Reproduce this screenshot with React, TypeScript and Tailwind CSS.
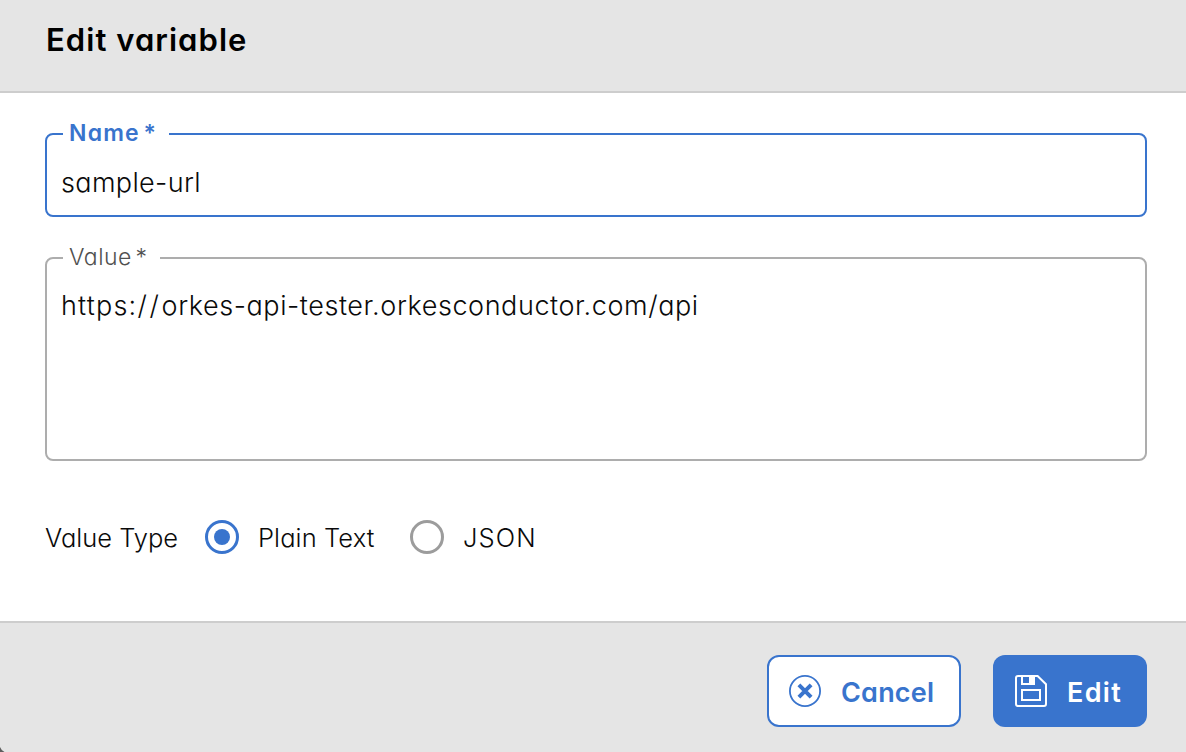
import type { ReactNode } from "react";

function Text({ className, children }: { className: string; children: ReactNode }) {
  return <span className={`block whitespace-nowrap ${className}`}>{children}</span>;
}

function CancelIcon() {
  return (
    <svg width="32" height="32" viewBox="0 0 32 32" fill="none" stroke="currentColor">
      <circle cx="16" cy="16" r="15.1" strokeWidth="1.8" />
      <path d="M9.9 9.9 22.1 22.1M22.1 9.9 9.9 22.1" strokeWidth="4" />
    </svg>
  );
}

function SaveIcon() {
  return (
    <svg width="32" height="32" viewBox="0 0 32 32" fill="none" stroke="currentColor" strokeWidth="2">
      <path d="M3 1H22.6L31 9.2V29Q31 31 29 31H3Q1 31 1 29V3Q1 1 3 1Z" />
      <path d="M7 1V9H19V1" />
      <path d="M14 1H20V10H14Z" fill="currentColor" stroke="none" />
      <path d="M7 15H25V25H7Z" />
    </svg>
  );
}

function Radio({ checked }: { checked?: boolean }) {
  return (
    <span
      role="radio"
      aria-checked={!!checked}
      className={`flex size-[34px] shrink-0 items-center justify-center rounded-full border-[3px] ${checked ? "border-[#3974cd]" : "border-[#9c9c9c]"}`}
    >
      {checked && <span className="size-4 rounded-full bg-[#3974cd]" />}
    </span>
  );
}

export default function App() {
  return (
    <div className="relative flex h-[752px] w-[1186px] flex-col overflow-hidden bg-white font-['Inter',sans-serif] font-light text-[#0a0a0a] [font-feature-settings:'cv11','ss03']">
      <header className="h-[93px] shrink-0 border-b-2 border-[#cdcdcd] bg-[#e5e5e5] pt-5 pl-[46px]">
        <Text className="text-[31px] leading-10 font-semibold tracking-[1.05px] text-black">Edit variable</Text>
      </header>

      <main className="flex flex-1 flex-col px-[45px] pt-[29px] pr-[39px]">
        <fieldset className="h-[95px] shrink-0 rounded-lg border-2 border-[#3974cd] pl-[14px]">
          <legend className="ml-[2px] h-6 w-[106px] pl-[6px] text-[#3974cd]">
            <Text className="text-[23px] leading-[22px] font-semibold tracking-[1.2px] [word-spacing:-3.5px]">Name *</Text>
          </legend>
          <Text className="pt-[19px] text-[27px] leading-9 tracking-[0.35px]">sample-url</Text>
        </fieldset>

        <fieldset className="mt-[29px] h-[215px] shrink-0 rounded-lg border-2 border-[#adadad] pl-[14px]">
          <legend className="ml-[2px] h-6 w-[97px] pl-[6px] text-[#505050]">
            <Text className="text-[23px] leading-[22px] tracking-[0.5px] [word-spacing:-3.5px]">Value *</Text>
          </legend>
          <Text className="pt-[18px] text-[27px] leading-9 tracking-[0.57px]">
            <span className="tracking-[1.2px]">https:</span><span className="tracking-[2.7px]">//</span>orkes-api-tester.orkesconductor.com/api
          </Text>
        </fieldset>

        <div className="mt-[56px] flex h-10 items-center" role="radiogroup">
          <Text className="w-[160px] pt-0.5 text-[25.5px]">Value Type</Text>
          <Radio checked />
          <Text className="w-[171px] pt-0.5 pl-[19px] text-[25.5px] tracking-[0.1px]">Plain Text</Text>
          <Radio />
          <Text className="pt-0.5 pl-[19px] text-[25.5px] tracking-[1.1px]">JSON</Text>
        </div>
      </main>

      <footer className="flex h-[131px] shrink-0 items-start justify-end gap-8 border-t-2 border-[#cdcdcd] bg-[#e5e5e5] pt-8 pr-[39px]">
        <button className="flex h-[72px] w-[194px] items-center gap-5 rounded-xl border-2 border-[#3974cd] bg-white pl-5 text-[#3974cd]">
          <CancelIcon />
          <Text className="pt-[5px] text-[27px] font-semibold tracking-[0.2px]">Cancel</Text>
        </button>
        <button className="flex h-[72px] w-[154px] items-center gap-5 rounded-xl bg-[#3974cd] pl-[22px] text-white">
          <SaveIcon />
          <Text className="pt-[5px] text-[27px] font-semibold tracking-[1.3px]">Edit</Text>
        </button>
      </footer>

      <svg className="absolute bottom-0 left-0" width="5" height="5" viewBox="0 0 5 5">
        <path d="M0 0Q1 3 4.5 5H0Z" fill="#5e5e5e" />
      </svg>
    </div>
  );
}
